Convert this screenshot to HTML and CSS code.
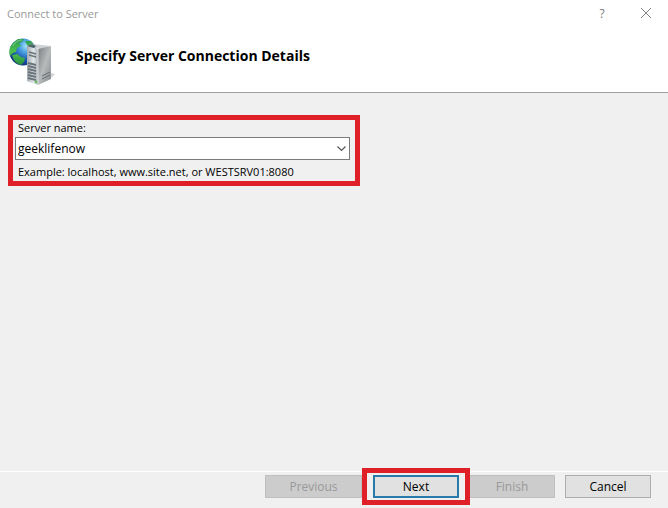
FILE: index.html
```html
<!DOCTYPE html>
<html lang="en">
<head>
<meta charset="utf-8">
<title>Connect to Server</title>
<link rel="stylesheet" href="styles.css">
</head>
<body>
<header class="header">
  <div class="titlebar">
    <span class="window-title">Connect to Server</span>
    <button class="window-button help" type="button" aria-label="Help">?</button>
    <button class="window-button" type="button" aria-label="Close">
      <svg width="10" height="10" viewBox="0 0 10 10"><path d="M0 0 10 10M10 0 0 10" stroke="#858585" fill="none"/></svg>
    </button>
  </div>
  <div class="banner">
    <svg class="server-icon" width="48" height="48" viewBox="0 0 48 48" aria-hidden="true">
      <defs>
        <radialGradient id="sea" cx="62%" cy="28%" r="75%">
          <stop offset="0" stop-color="#a5e3fb"/><stop offset=".3" stop-color="#4fa5e2"/><stop offset=".65" stop-color="#1d58b4"/><stop offset="1" stop-color="#12337c"/>
        </radialGradient>
        <linearGradient id="land" x1="0" y1="0" x2="0" y2="1">
          <stop offset="0" stop-color="#2d9b55"/><stop offset=".5" stop-color="#4ec24b"/><stop offset="1" stop-color="#279044"/>
        </linearGradient>
        <linearGradient id="side" x1="0" y1="0" x2="1" y2="1">
          <stop offset="0" stop-color="#777b7d"/><stop offset=".5" stop-color="#b8bbbc"/><stop offset="1" stop-color="#85898b"/>
        </linearGradient>
        <linearGradient id="front" x1="0" y1="0" x2="1" y2="0">
          <stop offset="0" stop-color="#a5acb1"/><stop offset=".6" stop-color="#e1e6e9"/><stop offset="1" stop-color="#a8afb2"/>
        </linearGradient>
      </defs>
      <circle cx="14" cy="14" r="13.500" fill="url(#sea)"/>
      <path d="M4 5 9 1 15 1 13 4 10 5 12 8 8 10 7 14 4 15 1 18Q-1 10 4 5ZM3 17 8 16 12 19 16 20 15 24 12 27Q5 25 3 17ZM16 3 22 3 25 7 21 9 18 7Z" fill="url(#land)"/>
      <path d="M4 8Q7 2 13 2" stroke="#a1df96" fill="none" opacity=".7"/>
      <path d="M29 46 43 39 46 36 42 35Z" fill="#d3d3d3"/>
      <path d="M18 8 23 6 42 8 31 11Z" fill="#ced2d4"/>
      <path d="M29 11 42 8V41L29 47Z" fill="url(#side)"/>
      <path d="M18 8 29 11V47L18 43Z" fill="url(#front)"/>
      <path d="M18 8 23 6 27 8 25 10Z" fill="#4c6266"/>
      <path d="M20 14 27 16M20 17 27 19" stroke="#6b7478" stroke-width="1.500"/>
      <path d="M19 25 27 27M19 28 27 30M19 31 27 33M19 34 27 36M19 37 27 39M19 40 27 42" stroke="#69747b" stroke-width="2"/>
      <path d="M29 11V47" stroke="#dbe0e2"/>
      <path d="M33 38 41 34M33 41 41 37" stroke="#666c6e"/>
      <path d="M26 43.500 28 44" stroke="#55b848" stroke-width="2"/>
    </svg>
    <h1>Specify Server Connection Details</h1>
  </div>
</header>
<main class="content">
  <div class="field highlight">
    <label for="server">Server name:</label>
    <div class="combo">
      <select id="server"><option>geeklifenow</option></select>
      <svg class="chevron" width="9" height="6" viewBox="0 0 9 6" aria-hidden="true"><path d="M.5.500 4.500 4.500 8.500.500" stroke="#555" fill="none" stroke-width="1.200"/></svg>
    </div>
    <p>Example: localhost, www.site.net, or WESTSRV01:8080</p>
  </div>
</main>
<footer class="footer">
  <button class="action previous" type="button" disabled>Previous</button>
  <div class="next-frame highlight"><button class="action next" type="button">Next</button></div>
  <button class="action" type="button" disabled>Finish</button>
  <button class="action cancel" type="button">Cancel</button>
</footer>
</body>
</html>
```
FILE: styles.css
```css
* { box-sizing: border-box; }
body {
  margin: 0;
  min-height: 100vh;
  display: flex;
  flex-direction: column;
  background: #f0f0f0;
  color: #000;
  font: 12px/16px "Open Sans", "Noto Sans", sans-serif;
}
.header {
  height: 93px;
  background: #fff;
  border-bottom: 1px solid #a0a0a0;
}
.titlebar {
  display: flex;
  align-items: center;
  height: 28px;
  padding-left: 7px;
}
.window-title {
  flex: 1;
  color: #999;
  font-size: 11px;
}
.window-button {
  width: 44px;
  height: 28px;
  padding: 0;
  border: 0;
  background: transparent;
  color: #777;
  font: inherit;
}
.banner {
  display: flex;
  align-items: center;
  gap: 19px;
  padding: 10px 9px 0;
}
.server-icon { flex: none; }
h1 {
  margin: 0 0 12px;
  font-size: 14px;
  line-height: 18px;
  font-weight: 700;
}
.content {
  flex: 1;
  padding: 22px 8px;
}
.highlight { border: 5px solid #df2029; }
.field {
  width: 352px;
  max-width: 100%;
  height: 71px;
  padding: 0 5px 0 2px;
  font-size: 11px;
}
.field label {
  display: block;
  height: 17px;
  padding-left: 3px;
}
.combo {
  display: grid;
  align-items: center;
  font-size: 12px;
}
.combo select {
  grid-area: 1 / 1;
  width: 100%;
  height: 23px;
  padding: 0 24px 0 2px;
  appearance: none;
  border: 1px solid #7a7a7a;
  border-radius: 0;
  background: #fff;
  color: #000;
  font: inherit;
}
.chevron {
  grid-area: 1 / 1;
  justify-self: end;
  margin-right: 4px;
  pointer-events: none;
}
.field p {
  margin: 4px 0 0;
  padding-left: 3px;
  white-space: nowrap;
}
.footer {
  display: flex;
  justify-content: flex-end;
  align-items: flex-start;
  height: 37px;
  padding: 3px 17px 0 0;
  border-top: 1px solid #fff;
}
.action {
  width: 86px;
  height: 23px;
  padding: 0;
  border: 1px solid #adadad;
  border-radius: 0;
  background: #e1e1e1;
  color: #000;
  font: inherit;
}
.action:disabled {
  border-color: #bfbfbf;
  background: #ccc;
  color: #999;
}
.previous { width: 97px; }
.next-frame {
  z-index: 1;
  display: grid;
  place-items: center;
  width: 108px;
  height: 37px;
  margin: -7px -1px 0 0;
}
.next { border: 2px solid #277aaa; }
.cancel { margin-left: 10px; }
```
